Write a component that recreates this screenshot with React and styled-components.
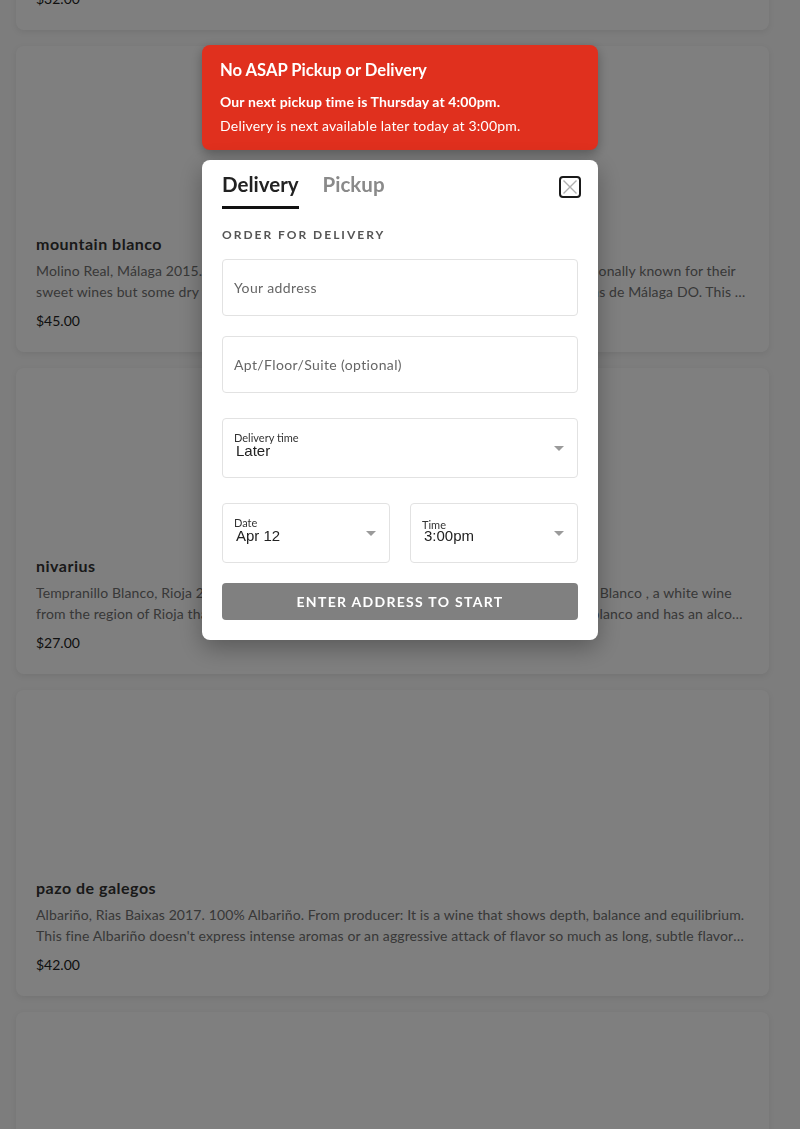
import React from 'react';
import styled, { createGlobalStyle } from 'styled-components';

const GlobalStyle = createGlobalStyle`
  html, body {
    margin: 0;
    padding: 0;
    background: #fafafa;
    font-family: "Lato", "Open Sans", sans-serif;
    overflow: hidden;
  }
  * { box-sizing: border-box; }
`;

const Page = styled.div`
  height: 1129px;
  overflow: hidden;
`;

const CardList = styled.div`
  display: flex;
  flex-direction: column;
  gap: 16px;
  width: 753px;
  margin: -276px 0 0 16px;
`;

const Card = styled.div`
  height: 306px;
  background: #fff;
  border-radius: 8px;
  box-shadow: 0 2px 6px rgba(0, 0, 0, 0.08);
  padding: 20px;
  display: flex;
  flex-direction: column;
`;

const CardImage = styled.div`
  height: 168px;
  flex-shrink: 0;
`;

const CardTitle = styled.div`
  font-size: 16px;
  font-weight: 700;
  letter-spacing: 0.5px;
  line-height: 20px;
  color: #333;
  margin-bottom: 6px;
`;

const CardDesc = styled.div`
  margin-bottom: 9px;
`;

const DescLine = styled.div`
  font-size: 14px;
  line-height: 21px;
  letter-spacing: 0.12px;
  color: #707070;
  white-space: nowrap;
  overflow: hidden;
  text-overflow: ellipsis;
`;

const CardPrice = styled.div`
  font-size: 14px;
  line-height: 20px;
  color: #222;
`;

const Overlay = styled.div`
  position: fixed;
  inset: 0;
  background: rgba(0, 0, 0, 0.5);
  display: flex;
  flex-direction: column;
  align-items: center;
  padding-top: 45px;
  gap: 10px;
`;

const Toast = styled.div`
  width: 396px;
  background: #e0301e;
  color: #fff;
  border-radius: 8px;
  padding: 15px 18px 12px;
  box-shadow: 0 4px 12px rgba(0, 0, 0, 0.3);
`;

const ToastTitle = styled.div`
  font-size: 16.6px;
  font-weight: 700;
  line-height: 20px;
  margin-bottom: 10px;
`;

const ToastLine = styled.div`
  font-size: 14px;
  line-height: 24px;
  font-weight: ${({ strong }) => (strong ? 700 : 400)};
  letter-spacing: ${({ strong }) => (strong ? 0.12 : 0.22)}px;
`;

const Modal = styled.div`
  width: 396px;
  background: #fff;
  border-radius: 8px;
  padding: 10px 20px 20px;
  box-shadow: 0 8px 24px rgba(0, 0, 0, 0.3);
`;

const Header = styled.div`
  display: flex;
  align-items: flex-start;
  justify-content: space-between;
`;

const Tabs = styled.div`
  display: flex;
  gap: 24px;
`;

const Tab = styled.div`
  font-size: 20.5px;
  font-weight: 700;
  line-height: 28px;
  padding-bottom: 8px;
  color: ${({ active }) => (active ? '#222' : '#8a8a8a')};
  border-bottom: 3px solid ${({ active }) => (active ? '#111' : 'transparent')};
`;

const CloseBtn = styled.button`
  margin-top: 6px;
  margin-right: -3px;
  width: 22px;
  height: 22px;
  padding: 0;
  border: 2px solid #1a1a1a;
  border-radius: 4px;
  background: #fff;
  display: flex;
  align-items: center;
  justify-content: center;
  cursor: pointer;
`;

const SectionLabel = styled.div`
  margin-top: 18px;
  font-size: 12px;
  font-weight: 700;
  letter-spacing: 2px;
  color: #555;
  line-height: 16px;
`;

const Form = styled.div`
  display: flex;
  flex-direction: column;
  margin-top: 16px;
`;

const TextInput = styled.input`
  height: 57px;
  width: 100%;
  border: 1px solid #e2e2e2;
  border-radius: 4px;
  padding: 0 11px;
  font-family: inherit;
  font-size: 14px;
  letter-spacing: 0.38px;
  color: #333;
  margin-bottom: ${({ gapAfter }) => gapAfter}px;
  &::placeholder { color: #666; }
`;

const Row = styled.div`
  display: grid;
  grid-template-columns: 1fr 1fr;
  gap: 20px;
  margin-bottom: 20px;
`;

const SelectBox = styled.div`
  position: relative;
  height: 60px;
  border: 1px solid #e2e2e2;
  border-radius: 4px;
  padding: 13px 11px 0;
  margin-bottom: ${({ gapAfter }) => gapAfter || 0}px;
`;

const SelectLabel = styled.div`
  font-size: 11px;
  line-height: 12px;
  color: #333;
  margin-top: ${({ low }) => (low ? 2 : 0)}px;
  margin-bottom: ${({ low }) => (low ? -2 : 0)}px;
`;

const SelectValue = styled.div`
  font-family: "Liberation Sans", Arial, sans-serif;
  font-size: 15px;
  line-height: 14px;
  color: #222;
  padding-left: 2px;
`;

const Caret = styled.span`
  position: absolute;
  right: 13px;
  top: 27px;
  width: 0;
  height: 0;
  border-left: 5px solid transparent;
  border-right: 5px solid transparent;
  border-top: 5px solid #9a9a9a;
`;

const SubmitBtn = styled.button`
  height: 37px;
  width: 100%;
  border: none;
  border-radius: 4px;
  background: #808080;
  color: #fff;
  font-family: inherit;
  font-size: 14px;
  font-weight: 700;
  letter-spacing: 1.3px;
`;

const products = [
  {
    title: 'cava brut',
    desc: ['Cava, Penedès NV. Sparkling wine.', ''],
    price: '$32.00',
  },
  {
    title: 'mountain blanco',
    desc: [
      'Molino Real, Málaga 2015. 100% Moscatel. From the US importer: Málaga has been traditionally known for their',
      'sweet wines but some dry white wines are also being produced nowadays under the Sierras de Málaga DO. This wine is made from old vines.',
    ],
    price: '$45.00',
  },
  {
    title: 'nivarius',
    desc: [
      'Tempranillo Blanco, Rioja 2016. 100% Tempranillo Blanco. From the producer: Tempranillo Blanco , a white wine',
      'from the region of Rioja that is made exclusively with the white grape variety tempranillo blanco and has an alcohol content of 13%.',
    ],
    price: '$27.00',
  },
  {
    title: 'pazo de galegos',
    desc: [
      'Albariño, Rias Baixas 2017. 100% Albariño. From producer: It is a wine that shows depth, balance and equilibrium.',
      "This fine Albariño doesn't express intense aromas or an aggressive attack of flavor so much as long, subtle flavors and a long finish.",
    ],
    price: '$42.00',
  },
  { title: '', desc: ['', ''], price: '' },
];

const Select = ({ label, value, low, gapAfter }) => (
  <SelectBox gapAfter={gapAfter}>
    <SelectLabel low={low}>{label}</SelectLabel>
    <SelectValue>{value}</SelectValue>
    <Caret />
  </SelectBox>
);

export default function App() {
  return (
    <Page>
      <GlobalStyle />
      <CardList>
        {products.map((p, i) => (
          <Card key={i}>
            <CardImage />
            <CardTitle>{p.title}</CardTitle>
            <CardDesc>
              {p.desc.map((line, j) => (
                <DescLine key={j}>{line || '\u00a0'}</DescLine>
              ))}
            </CardDesc>
            <CardPrice>{p.price}</CardPrice>
          </Card>
        ))}
      </CardList>

      <Overlay>
        <Toast>
          <ToastTitle>No ASAP Pickup or Delivery</ToastTitle>
          <ToastLine strong>Our next pickup time is Thursday at 4:00pm.</ToastLine>
          <ToastLine>Delivery is next available later today at 3:00pm.</ToastLine>
        </Toast>

        <Modal>
          <Header>
            <Tabs>
              <Tab active>Delivery</Tab>
              <Tab>Pickup</Tab>
            </Tabs>
            <CloseBtn aria-label="Close">
              <svg width="16" height="16" viewBox="0 0 16 16">
                <path d="M1.5 1.5 L14.5 14.5 M14.5 1.5 L1.5 14.5" stroke="#b0b0b0" strokeWidth="1.4" fill="none" />
              </svg>
            </CloseBtn>
          </Header>

          <SectionLabel>ORDER FOR DELIVERY</SectionLabel>

          <Form>
            <TextInput placeholder="Your address" gapAfter={20} />
            <TextInput placeholder="Apt/Floor/Suite (optional)" gapAfter={25} />
            <Select label="Delivery time" value="Later" gapAfter={25} />
            <Row>
              <Select label="Date" value="Apr 12" />
              <Select label="Time" value="3:00pm" low />
            </Row>
            <SubmitBtn>ENTER ADDRESS TO START</SubmitBtn>
          </Form>
        </Modal>
      </Overlay>
    </Page>
  );
}
